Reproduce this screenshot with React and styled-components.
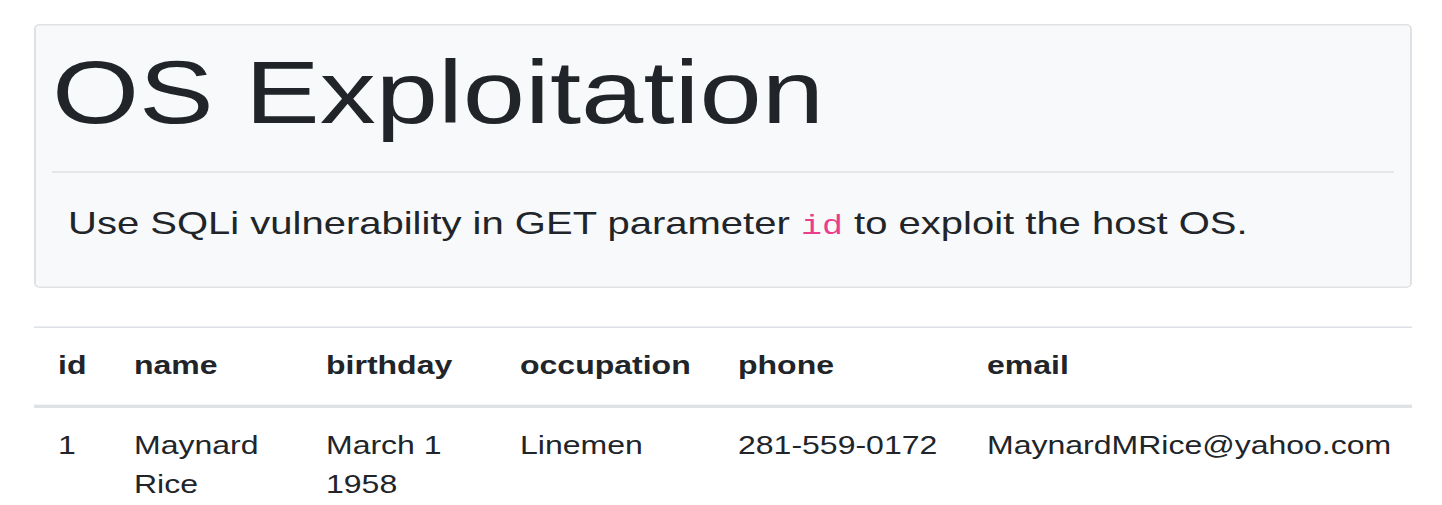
import styled, { createGlobalStyle } from "styled-components";

const GlobalStyle = createGlobalStyle`
  html {
    overflow: hidden;
  }
  body {
    margin: 0;
    background: #fff;
    font-family: "Liberation Sans", Arial, sans-serif;
    font-size: 16px;
    line-height: 1.5;
    color: #212529;
  }
`;

const Page = styled.div`
  width: 1442px;
  height: 505px;
  overflow: hidden;
`;

// the reference is a bootstrap page stretched 2x wide and 1.6x tall
const Stretch = styled.div`
  width: 721px;
  padding: 14.8px 15px 0 17px;
  box-sizing: border-box;
  transform: scale(2, 1.6);
  transform-origin: 0 0;
`;

const Jumbotron = styled.div`
  background: #f8f9fa;
  border: 1px solid #dfe2e5;
  border-radius: 3px;
  padding: 8.3px 8px 8px;
  margin-bottom: 24px;
`;

const Title = styled.h1`
  margin: 0;
  font-size: 56px;
  font-weight: 300;
  line-height: 1.2;
`;

const Rule = styled.hr`
  margin: 16px 0;
  border: 0;
  border-top: 1px solid rgba(0, 0, 0, 0.1);
`;

const Lead = styled.p`
  margin: 0 0 16px;
  padding: 0 8px;
  font-size: 20px;
  font-weight: 300;
`;

const Code = styled.code`
  font-family: "Liberation Mono", "DejaVu Sans Mono", monospace;
  font-size: 87.5%;
  color: #e83e8c;
`;

const Table = styled.table`
  width: 688.5px;
  border-collapse: collapse;
  table-layout: fixed;
`;

const Th = styled.th`
  width: ${(p) => p.$w - 24}px;
  padding: 12px;
  text-align: left;
  font-weight: 700;
  vertical-align: bottom;
  border-top: 1px solid #dee2e6;
  border-bottom: 2px solid #dee2e6;
`;

const Td = styled.td`
  padding: 12px;
  vertical-align: top;
`;

const columns = [
  { key: "id", w: 38 },
  { key: "name", w: 96 },
  { key: "birthday", w: 97 },
  { key: "occupation", w: 109 },
  { key: "phone", w: 124.5 },
  { key: "email", w: 224 },
];

const rows = [
  {
    id: 1,
    name: "Maynard Rice",
    birthday: "March 1 1958",
    occupation: "Linemen",
    phone: "281-559-0172",
    email: "MaynardMRice@yahoo.com",
  },
];

export default function App() {
  return (
    <Page>
      <GlobalStyle />
      <Stretch>
        <Jumbotron>
          <Title>OS Exploitation</Title>
          <Rule />
          <Lead>
            Use SQLi vulnerability in GET parameter <Code>id</Code> to exploit
            the host OS.
          </Lead>
        </Jumbotron>

        <Table>
          <thead>
            <tr>
              {columns.map((c) => (
                <Th key={c.key} $w={c.w}>
                  {c.key}
                </Th>
              ))}
            </tr>
          </thead>
          <tbody>
            {rows.map((r) => (
              <tr key={r.id}>
                {columns.map((c) => (
                  <Td key={c.key}>{r[c.key]}</Td>
                ))}
              </tr>
            ))}
          </tbody>
        </Table>
      </Stretch>
    </Page>
  );
}
